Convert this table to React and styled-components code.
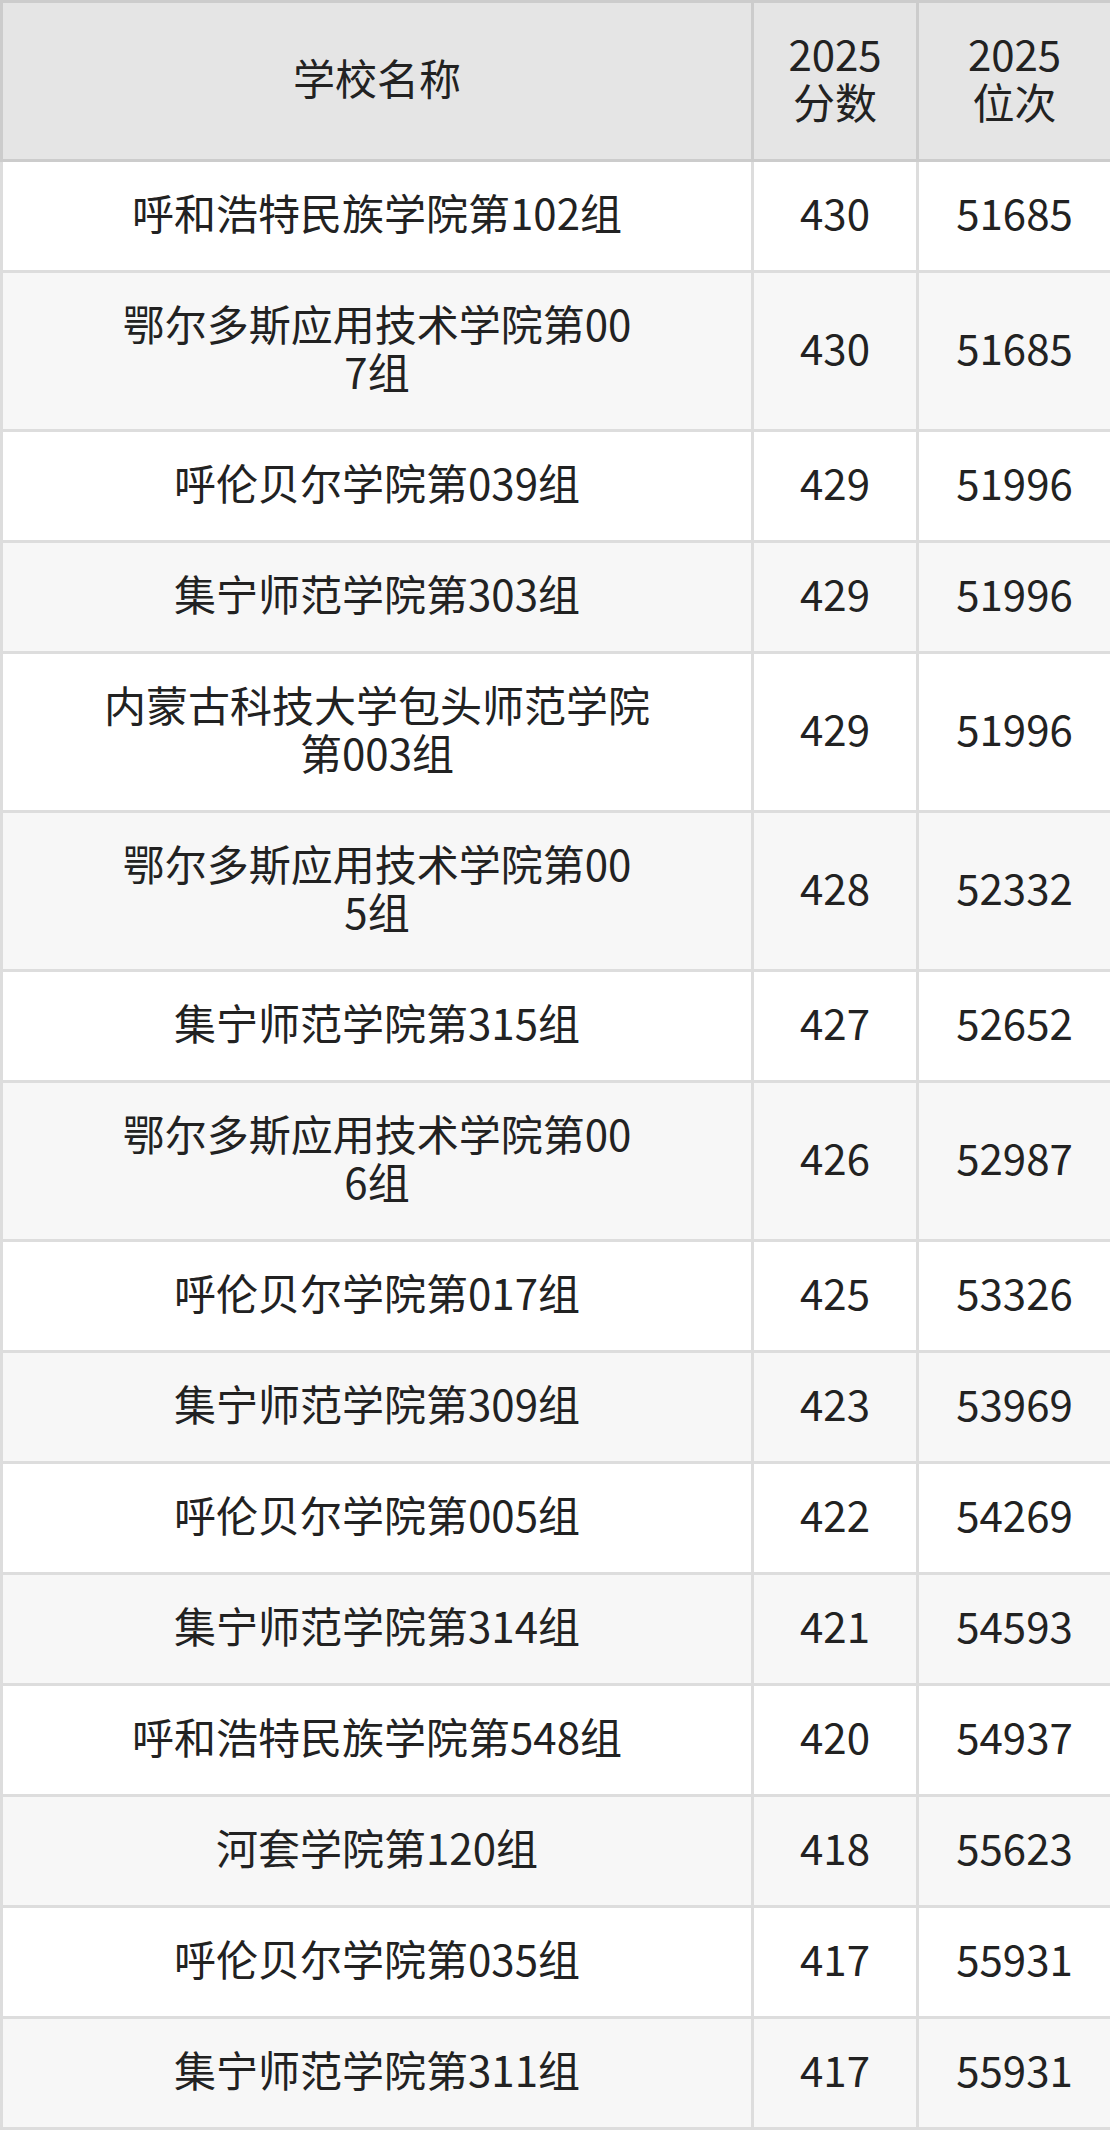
import styled, { createGlobalStyle } from "styled-components";

const GlobalStyle = createGlobalStyle`
  html, body {
    margin: 0;
    padding: 0;
    background: #ffffff;
  }
  body {
    font-family: "Noto Sans CJK SC", "Noto Sans", sans-serif;
    color: #222222;
  }
`;

const rows = [
  { name: "呼和浩特民族学院第102组", score: 430, rank: 51685 },
  { name: "鄂尔多斯应用技术学院第007组", score: 430, rank: 51685 },
  { name: "呼伦贝尔学院第039组", score: 429, rank: 51996 },
  { name: "集宁师范学院第303组", score: 429, rank: 51996 },
  { name: "内蒙古科技大学包头师范学院第003组", score: 429, rank: 51996 },
  { name: "鄂尔多斯应用技术学院第005组", score: 428, rank: 52332 },
  { name: "集宁师范学院第315组", score: 427, rank: 52652 },
  { name: "鄂尔多斯应用技术学院第006组", score: 426, rank: 52987 },
  { name: "呼伦贝尔学院第017组", score: 425, rank: 53326 },
  { name: "集宁师范学院第309组", score: 423, rank: 53969 },
  { name: "呼伦贝尔学院第005组", score: 422, rank: 54269 },
  { name: "集宁师范学院第314组", score: 421, rank: 54593 },
  { name: "呼和浩特民族学院第548组", score: 420, rank: 54937 },
  { name: "河套学院第120组", score: 418, rank: 55623 },
  { name: "呼伦贝尔学院第035组", score: 417, rank: 55931 },
  { name: "集宁师范学院第311组", score: 417, rank: 55931 },
];

// names are wrapped every 13 characters
const splitName = (name) => {
  const chars = Array.from(name);
  const lines = [];
  for (let i = 0; i < chars.length; i += 13) {
    lines.push(chars.slice(i, i + 13).join(""));
  }
  return lines;
};

const Table = styled.table`
  width: 1110px;
  table-layout: fixed;
  border-collapse: collapse;
  font-size: 42px;
  line-height: 48px;
`;

const HeadCell = styled.th`
  background: #e5e5e5;
  border: 3px solid #cccccc;
  padding: 26px 0 34px;
  font-weight: 400;
  text-align: center;
  vertical-align: middle;
  color: #222222;
`;

const Row = styled.tr`
  background: ${(p) => (p.$alt ? "#f7f7f7" : "#ffffff")};
`;

const Cell = styled.td`
  border: 3px solid #dddddd;
  padding: 26px 0 34px;
  text-align: center;
  vertical-align: middle;
  color: #222222;
`;

const Line = styled.div`
  white-space: nowrap;
`;

export default function App() {
  return (
    <>
      <GlobalStyle />
      <Table>
        <colgroup>
          <col style={{ width: 751 }} />
          <col style={{ width: 165 }} />
          <col style={{ width: 194 }} />
        </colgroup>
        <thead>
          <tr>
            <HeadCell>学校名称</HeadCell>
            <HeadCell>
              <Line>2025</Line>
              <Line>分数</Line>
            </HeadCell>
            <HeadCell>
              <Line>2025</Line>
              <Line>位次</Line>
            </HeadCell>
          </tr>
        </thead>
        <tbody>
          {rows.map((r, i) => (
            <Row key={i} $alt={i % 2 === 1}>
              <Cell>
                {splitName(r.name).map((line, j) => (
                  <Line key={j}>{line}</Line>
                ))}
              </Cell>
              <Cell>{r.score}</Cell>
              <Cell>{r.rank}</Cell>
            </Row>
          ))}
        </tbody>
      </Table>
    </>
  );
}
